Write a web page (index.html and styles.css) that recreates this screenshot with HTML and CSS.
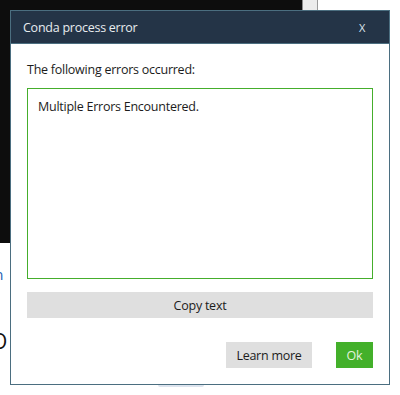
FILE: index.html
```html
<!DOCTYPE html>
<html>
<head>
    <meta charset="UTF-8">
    <title>Conda process error</title>
    <link rel="stylesheet" href="styles.css">
</head>
<body>
    <div class="app">
        <div class="app-top">
            <div class="app-panel"></div>
            <div class="app-strip"></div>
        </div>
        <div class="app-link">In</div>
        <div class="app-heading">O</div>
    </div>

    <div class="dialog">
        <div class="dialog-header">
            <span class="dialog-title">Conda process error</span>
            <span class="dialog-close">X</span>
        </div>
        <div class="dialog-body">
            <div class="dialog-label">The following errors occurred:</div>
            <div class="error-box">Multiple Errors Encountered.</div>
            <button class="btn btn-copy">Copy text</button>
            <div class="dialog-actions">
                <button class="btn btn-learn">Learn more</button>
                <button class="btn btn-ok">Ok</button>
            </div>
        </div>
    </div>
    <div class="dialog-shadow"></div>
</body>
</html>
```

FILE: styles.css
```css
body {
    margin: 0;
    width: 400px;
    height: 395px;
    overflow: hidden;
    background: #ffffff;
    font-family: "Open Sans", sans-serif;
    position: relative;
}

.app-top {
    display: flex;
}

.app-panel {
    width: 302px;
    height: 243px;
    background: #0d0d0d;
}

.app-strip {
    width: 14px;
    height: 10px;
    background: #ececec;
    border-left: 1px solid #8a8a8a;
    border-right: 1px solid #9a9a9a;
}

.app-link {
    margin: 21px 0 0 -10px;
    font-size: 15px;
    line-height: 20px;
    color: #1e5fb4;
}

.app-heading {
    margin: 44px 0 0 -9px;
    font-size: 21px;
    line-height: 26px;
    color: #111111;
}

.dialog {
    position: absolute;
    left: 10px;
    top: 10px;
    width: 378px;
    height: 373px;
    border: 1px solid #4b6e80;
    background: #ffffff;
    letter-spacing: -0.25px;
}

.dialog-shadow {
    position: absolute;
    left: 158px;
    top: 385px;
    width: 46px;
    height: 2px;
    border-radius: 0 0 4px 4px;
    background: #dde4ee;
}

.dialog-header {
    display: flex;
    justify-content: space-between;
    align-items: center;
    height: 32px;
    padding: 0 24px 0 12px;
    background: #243447;
    border-bottom: 1px solid #4b6e80;
    color: #e8ecef;
}

.dialog-title {
    font-size: 12.5px;
}

.dialog-close {
    font-size: 11px;
    color: #dfe6ee;
}

.dialog-body {
    padding: 0 16px;
}

.dialog-label {
    margin-top: 18px;
    font-size: 12.5px;
    line-height: 16px;
    color: #1c1c1c;
}

.error-box {
    margin-top: 10px;
    height: 169px;
    padding: 10px;
    border: 1px solid #45ae2c;
    font-size: 12.5px;
    line-height: 16px;
    color: #1c1c1c;
}

.btn {
    font-family: "Open Sans", sans-serif;
    font-size: 12.5px;
    letter-spacing: -0.25px;
    height: 26px;
    border: none;
    padding: 0;
    cursor: pointer;
}

.btn-copy {
    display: block;
    width: 100%;
    margin-top: 13px;
    background: #dfdfdf;
    color: #1c1c1c;
}

.dialog-actions {
    display: flex;
    justify-content: flex-end;
    gap: 24px;
    margin-top: 24px;
}

.btn-learn {
    width: 86px;
    background: #dfdfdf;
    color: #1c1c1c;
}

.btn-ok {
    width: 37px;
    background: #43b02a;
    color: #e3f3de;
}
```
